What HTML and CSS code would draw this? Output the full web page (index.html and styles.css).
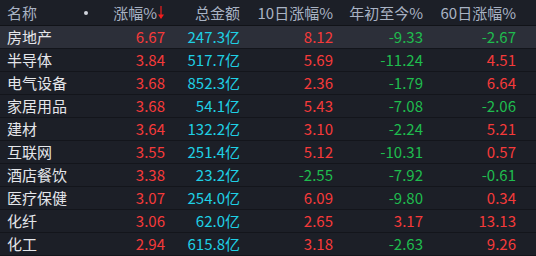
FILE: index.html
```html
<!DOCTYPE html>
<html lang="zh">
<head>
<meta charset="utf-8">
<link rel="stylesheet" href="styles.css">
</head>
<body>
<div class="table">
  <div class="row head">
    <div class="c name">名称<span class="dot"></span></div>
    <div class="c">涨幅%<svg class="arrow" width="8" height="14" viewBox="0 0 8 14"><path d="M4 0V12" stroke="#f21d1d" stroke-width="1.2"/><path d="M1 8.5L4 13L7 8.5Z" fill="#f21d1d"/></svg></div>
    <div class="c">总金额</div>
    <div class="c">10日涨幅%</div>
    <div class="c">年初至今%</div>
    <div class="c">60日涨幅%</div>
  </div>
  <div class="row sel"><div class="c name">房地产</div><div class="c r">6.67</div><div class="c b">247.3亿</div><div class="c r">8.12</div><div class="c g">-9.33</div><div class="c g">-2.67</div></div>
  <div class="row"><div class="c name">半导体</div><div class="c r">3.84</div><div class="c b">517.7亿</div><div class="c r">5.69</div><div class="c g">-11.24</div><div class="c r">4.51</div></div>
  <div class="row"><div class="c name">电气设备</div><div class="c r">3.68</div><div class="c b">852.3亿</div><div class="c r">2.36</div><div class="c g">-1.79</div><div class="c r">6.64</div></div>
  <div class="row"><div class="c name">家居用品</div><div class="c r">3.68</div><div class="c b">54.1亿</div><div class="c r">5.43</div><div class="c g">-7.08</div><div class="c g">-2.06</div></div>
  <div class="row"><div class="c name">建材</div><div class="c r">3.64</div><div class="c b">132.2亿</div><div class="c r">3.10</div><div class="c g">-2.24</div><div class="c r">5.21</div></div>
  <div class="row"><div class="c name">互联网</div><div class="c r">3.55</div><div class="c b">251.4亿</div><div class="c r">5.12</div><div class="c g">-10.31</div><div class="c r">0.57</div></div>
  <div class="row"><div class="c name">酒店餐饮</div><div class="c r">3.38</div><div class="c b">23.2亿</div><div class="c g">-2.55</div><div class="c g">-7.92</div><div class="c g">-0.61</div></div>
  <div class="row"><div class="c name">医疗保健</div><div class="c r">3.07</div><div class="c b">254.0亿</div><div class="c r">6.09</div><div class="c g">-9.80</div><div class="c r">0.34</div></div>
  <div class="row"><div class="c name">化纤</div><div class="c r">3.06</div><div class="c b">62.0亿</div><div class="c r">2.65</div><div class="c r">3.17</div><div class="c r">13.13</div></div>
  <div class="row"><div class="c name">化工</div><div class="c r">2.94</div><div class="c b">615.8亿</div><div class="c r">3.18</div><div class="c g">-2.63</div><div class="c r">9.26</div></div>
</div>
</body>
</html>
```
FILE: styles.css
```css
html, body {
  margin: 0;
  padding: 0;
  background: #1c1f27;
  width: 536px;
  height: 256px;
  overflow: hidden;
}
.table {
  font-family: "Noto Sans CJK SC", "Noto Sans", sans-serif;
  font-size: 15px;
  color: #e4e6ea;
}
.row {
  display: grid;
  grid-template-columns: 93px 65px 75px 93px 90px 93px;
  padding: 0 20px 0 7px;
  height: 22px;
  border-bottom: 1px solid #13151b;
  align-items: center;
  line-height: 22px;
}
.row.head {
  height: 25px;
  line-height: 25px;
  color: #a9b3c4;
  border-bottom: 1px solid #111318;
}
.row.sel {
  background: #2c2f39;
}
.c {
  text-align: right;
  white-space: nowrap;
}
.c.name {
  text-align: left;
  position: relative;
}
.dot {
  position: absolute;
  left: 77px;
  top: 11px;
  width: 4px;
  height: 4px;
  border-radius: 50%;
  background: #d0d4dc;
}
.arrow {
  vertical-align: -1px;
}
.r { color: #f53a3a; }
.g { color: #1fbc4e; }
.b { color: #1fd0e4; }
```
